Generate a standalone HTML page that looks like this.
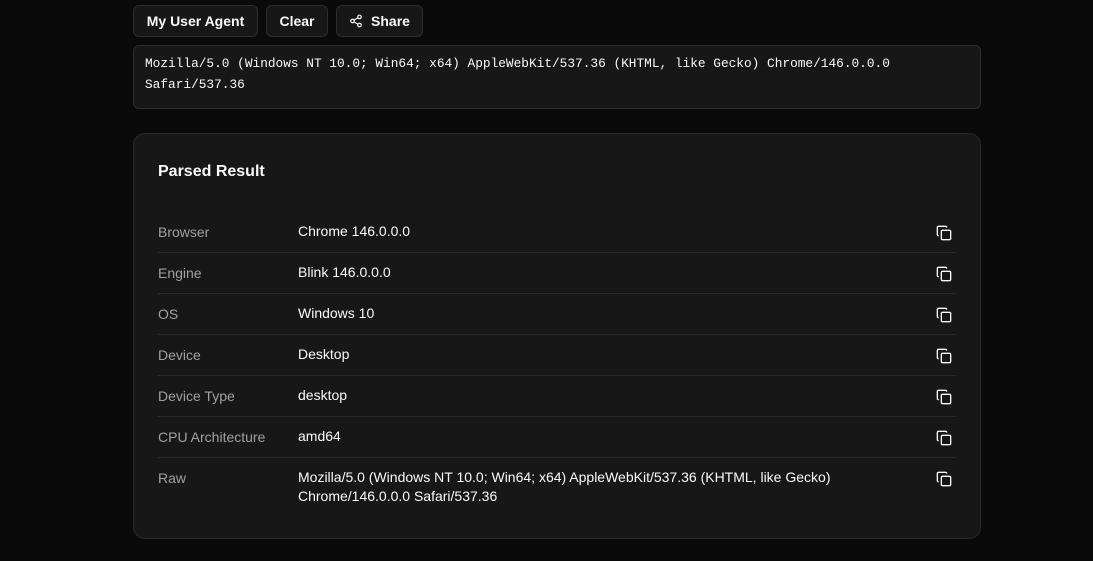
<!DOCTYPE html><html><head><style>
*{box-sizing:border-box;margin:0;padding:0}
body{width:1093px;height:561px;background:#0a0a0a;font-family:"Liberation Sans",sans-serif;color:#fafafa;position:relative;overflow:hidden}
.btn{position:absolute;top:5px;height:32px;border:1px solid #2e2e2e;background:#171717;border-radius:6px;font-size:14px;font-weight:bold;display:flex;align-items:center;justify-content:center;gap:8px}
.ta{position:absolute;left:133px;top:45px;width:848px;height:64px;border:1px solid #2e2e2e;border-radius:6px;background:#171717;font-family:"Liberation Mono",monospace;font-size:12.8px;line-height:21px;padding:7px 11px;color:#fafafa}
.card{position:absolute;left:133px;top:133px;width:848px;height:406px;border:1px solid #2a2a2a;border-radius:12px;background:#171717}
h2{position:absolute;left:24px;top:29px;font-size:16px;font-weight:bold}
.row{position:absolute;left:24px;width:798px;border-bottom:1px solid #2a2a2a;font-size:14px}
.row .l{position:absolute;left:0;top:12px;color:#a1a1a1}
.row .v{position:absolute;left:140px;top:10px;line-height:19px;width:600px}
.row svg{position:absolute;left:778px;top:13px}
</style></head><body>
<div class="btn" style="left:133px;width:125px">My User Agent</div>
<div class="btn" style="left:266px;width:62px">Clear</div>
<div class="btn" style="left:336px;width:87px"><svg width="14" height="14" viewBox="0 0 24 24" fill="none" stroke="#fafafa" stroke-width="2"><circle cx="18" cy="5" r="3"/><circle cx="6" cy="12" r="3"/><circle cx="18" cy="19" r="3"/><path d="M8.6 13.5l6.8 4M15.4 6.5l-6.8 4"/></svg>Share</div>
<div class="ta">Mozilla/5.0 (Windows NT 10.0; Win64; x64) AppleWebKit/537.36 (KHTML, like Gecko) Chrome/146.0.0.0<br>Safari/537.36</div>
<div class="card"><h2>Parsed Result</h2>
<div class="row" style="top:78px;height:41px"><span class="l">Browser</span><span class="v">Chrome 146.0.0.0</span><svg width="16" height="16" viewBox="0 0 24 24" fill="none" stroke="#fafafa" stroke-width="2"><rect x="8" y="8" width="14" height="14" rx="2"/><path d="M4 16c-1.1 0-2-.9-2-2V4c0-1.1.9-2 2-2h10c1.1 0 2 .9 2 2"/></svg></div>
<div class="row" style="top:119px;height:41px"><span class="l">Engine</span><span class="v">Blink 146.0.0.0</span><svg width="16" height="16" viewBox="0 0 24 24" fill="none" stroke="#fafafa" stroke-width="2"><rect x="8" y="8" width="14" height="14" rx="2"/><path d="M4 16c-1.1 0-2-.9-2-2V4c0-1.1.9-2 2-2h10c1.1 0 2 .9 2 2"/></svg></div>
<div class="row" style="top:160px;height:41px"><span class="l">OS</span><span class="v">Windows 10</span><svg width="16" height="16" viewBox="0 0 24 24" fill="none" stroke="#fafafa" stroke-width="2"><rect x="8" y="8" width="14" height="14" rx="2"/><path d="M4 16c-1.1 0-2-.9-2-2V4c0-1.1.9-2 2-2h10c1.1 0 2 .9 2 2"/></svg></div>
<div class="row" style="top:201px;height:41px"><span class="l">Device</span><span class="v">Desktop</span><svg width="16" height="16" viewBox="0 0 24 24" fill="none" stroke="#fafafa" stroke-width="2"><rect x="8" y="8" width="14" height="14" rx="2"/><path d="M4 16c-1.1 0-2-.9-2-2V4c0-1.1.9-2 2-2h10c1.1 0 2 .9 2 2"/></svg></div>
<div class="row" style="top:242px;height:41px"><span class="l">Device Type</span><span class="v">desktop</span><svg width="16" height="16" viewBox="0 0 24 24" fill="none" stroke="#fafafa" stroke-width="2"><rect x="8" y="8" width="14" height="14" rx="2"/><path d="M4 16c-1.1 0-2-.9-2-2V4c0-1.1.9-2 2-2h10c1.1 0 2 .9 2 2"/></svg></div>
<div class="row" style="top:283px;height:41px"><span class="l">CPU Architecture</span><span class="v">amd64</span><svg width="16" height="16" viewBox="0 0 24 24" fill="none" stroke="#fafafa" stroke-width="2"><rect x="8" y="8" width="14" height="14" rx="2"/><path d="M4 16c-1.1 0-2-.9-2-2V4c0-1.1.9-2 2-2h10c1.1 0 2 .9 2 2"/></svg></div>
<div class="row" style="top:324px;height:60px;border:none"><span class="l">Raw</span><span class="v">Mozilla/5.0 (Windows NT 10.0; Win64; x64) AppleWebKit/537.36 (KHTML, like Gecko) Chrome/146.0.0.0 Safari/537.36</span><svg width="16" height="16" viewBox="0 0 24 24" fill="none" stroke="#fafafa" stroke-width="2"><rect x="8" y="8" width="14" height="14" rx="2"/><path d="M4 16c-1.1 0-2-.9-2-2V4c0-1.1.9-2 2-2h10c1.1 0 2 .9 2 2"/></svg></div>
</div>
</body></html>
